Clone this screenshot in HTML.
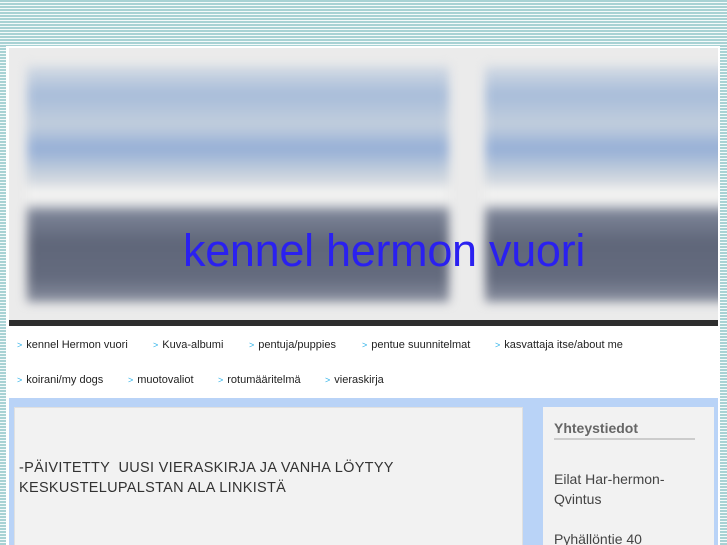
<!DOCTYPE html>
<html style="width:727px;height:545px;overflow:hidden"><head><style>
*{margin:0;padding:0;box-sizing:border-box}
body{width:727px;height:545px;overflow:hidden;font-family:"Liberation Sans",sans-serif;
background:repeating-linear-gradient(180deg,#a8d2d4 0,#a8d2d4 2px,#f4fafa 2px,#f4fafa 3px);position:relative}
#page{position:absolute;left:6px;top:46px;width:714px;height:499px;background:#fff}
#hdr{position:absolute;left:9px;top:48px;width:709px;height:272px;background:#ebebeb;overflow:hidden}
.pic{position:absolute;filter:blur(5px);
background:linear-gradient(180deg,#d4dbe4 0%,#a7bcd9 12%,#c2cedd 25%,#94aed6 35%,#c4cfdc 45%,#d9dde2 50%,#f6f6f4 53%,#eeeeee 58%,#7c8497 62%,#5f6679 75%,#646b7e 90%,#8a90a0 100%)}
#title{position:absolute;left:183px;top:225px;font-size:45px;color:#2a20f0;letter-spacing:-0.3px;white-space:nowrap}
#bar{position:absolute;left:9px;top:320px;width:709px;height:6px;background:#2e2e2e}
.nav{position:absolute;font-size:11px;color:#222;white-space:nowrap}
.nav span{color:#2bb0e8;font-size:9px;margin-right:4px}
#blue{position:absolute;left:9px;top:398px;width:709px;height:147px;background:#b9d3f7}
#main{position:absolute;left:14px;top:407px;width:509px;height:138px;background:#f2f2f2;border:1px solid #e0e0e0;border-bottom:0}
#main p{position:absolute;left:4px;top:50px;font-size:14.5px;color:#333;line-height:20px;letter-spacing:0.3px;white-space:nowrap}
#side{position:absolute;left:543px;top:407px;width:171px;height:138px;background:#f2f2f2}
#side h3{position:absolute;left:11px;top:13px;width:141px;font-size:14px;color:#666;border-bottom:2px solid #ccc;padding-bottom:2px}
#side p{position:absolute;left:11px;font-size:14px;color:#444;line-height:20px}
</style></head><body>
<div id="page"></div>
<div id="hdr">
<div class="pic" style="left:18px;top:18px;width:422px;height:236px"></div>
<div class="pic" style="left:476px;top:18px;width:245px;height:236px"></div>
</div>
<div id="title">kennel hermon vuori</div>
<div id="bar"></div>
<div class="nav" style="left:17px;top:339px"><span>&gt;</span>kennel Hermon vuori</div>
<div class="nav" style="left:153px;top:339px"><span>&gt;</span>Kuva-albumi</div>
<div class="nav" style="left:249px;top:339px"><span>&gt;</span>pentuja/puppies</div>
<div class="nav" style="left:362px;top:339px"><span>&gt;</span>pentue suunnitelmat</div>
<div class="nav" style="left:495px;top:339px"><span>&gt;</span>kasvattaja itse/about me</div>
<div class="nav" style="left:17px;top:374px"><span>&gt;</span>koirani/my dogs</div>
<div class="nav" style="left:128px;top:374px"><span>&gt;</span>muotovaliot</div>
<div class="nav" style="left:218px;top:374px"><span>&gt;</span>rotumääritelmä</div>
<div class="nav" style="left:325px;top:374px"><span>&gt;</span>vieraskirja</div>
<div id="blue"></div>
<div id="main"><p>-PÄIVITETTY &nbsp;UUSI VIERASKIRJA JA VANHA LÖYTYY<br>KESKUSTELUPALSTAN ALA LINKISTÄ</p></div>
<div id="side"><h3>Yhteystiedot</h3>
<p style="top:62px">Eilat Har-hermon-<br>Qvintus</p>
<p style="top:122px">Pyhällöntie 40</p></div>
</body></html>
